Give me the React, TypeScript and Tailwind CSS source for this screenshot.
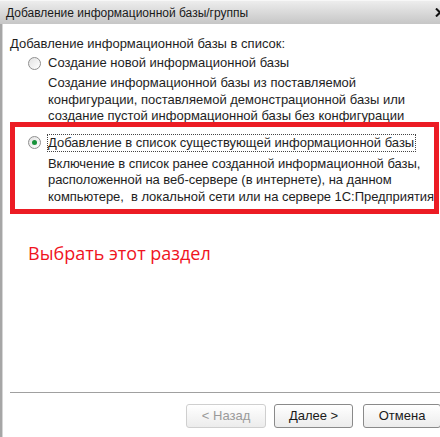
const Radio = ({ checked }: { checked?: boolean }) => (
  <span className="w-[13px] h-[13px] shrink-0 rounded-full border border-[#8f8f8f] bg-gradient-to-br from-[#e2e2e2] to-white flex items-center justify-center">
    {checked && <span className="w-[5px] h-[5px] rounded-full bg-[#17923a]" />}
  </span>
);

const Btn = ({ children, disabled, w }: { children: string; disabled?: boolean; w: string }) => (
  <div
    className={
      'h-6 rounded-[3px] border flex items-center justify-center text-[13px] bg-gradient-to-b from-white to-[#ececec] ' +
      w +
      (disabled ? ' border-[#cfcfcf] text-[#9a9a9a]' : ' border-[#8a8a8a] text-[#1a1a1a]')
    }
  >
    {children}
  </div>
);

export default function App() {
  return (
    <div className="w-[440px] h-[437px] overflow-hidden bg-white flex flex-col font-['Liberation_Sans',Arial,sans-serif] text-[#1e1e1e]">
      <div className="h-6 shrink-0 flex items-center overflow-hidden bg-gradient-to-b from-[#ededed] to-[#c6c6c6] border-t border-[#f7f7f7]">
        <span className="pl-[6px] text-[12px] text-[#1a1a1a]">Добавление информационной базы/группы</span>
        <svg className="ml-auto -mr-[5px] shrink-0" width="10" height="9" viewBox="0 0 10 9">
          <path d="M1 0.5 L9 8.5 M9 0.5 L1 8.5" stroke="#111" strokeWidth="2" />
        </svg>
      </div>

      <div className="flex flex-1">
        <div className="w-[3px] shrink-0 bg-[#a6a6a6] border-r border-[#d6d6d6]" />
        <div className="flex-1 flex flex-col pl-[7px] text-[13px]">
          <div className="mt-3 leading-4">Добавление информационной базы в список:</div>

          <div className="mt-[3px] ml-[18px] flex items-center gap-[7px] leading-4">
            <Radio />
            <span>Создание новой информационной базы</span>
          </div>
          <div className="mt-1 pl-[38px] leading-[16.5px]">
            <div>Создание информационной базы из поставляемой</div>
            <div>конфигурации, поставляемой демонстрационной базы или</div>
            <div>создание пустой информационной базы без конфигурации</div>
          </div>

          <div className="-mt-[3px] mr-[2px] border-[5px] border-[#ec1c24] pl-[13px] pt-[7px] pb-[4px]">
            <div className="flex items-center gap-[6px] leading-4">
              <Radio checked />
              <span className="border border-dotted border-[#444] pr-[1px] whitespace-nowrap">
                Добавление в список существующей информационной базы
              </span>
            </div>
            <div className="mt-[4px] pl-[20px] leading-[16.5px] whitespace-nowrap tracking-[-0.05px]">
              <div>Включение в список ранее созданной информационной базы,</div>
              <div>расположенной на веб-сервере (в интернете), на данном</div>
              <div>компьютере,&nbsp; в локальной сети или на сервере 1С:Предприятия</div>
            </div>
          </div>

          <div className="mt-[27px] ml-[18px] text-[18px] leading-6 text-[#f0141e] font-['Open_Sans',sans-serif]">
            Выбрать этот раздел
          </div>

          <div className="flex-1" />
          <div className="h-px bg-[#a0a0a0]" />
          <div className="mt-[11px] mb-[9px] flex justify-end">
            <Btn disabled w="w-[80px]">&lt; Назад</Btn>
            <div className="w-2" />
            <Btn w="w-[79px]">Далее &gt;</Btn>
            <div className="w-[10px]" />
            <Btn w="w-[78px]">Отмена</Btn>
          </div>
        </div>
      </div>
    </div>
  );
}
